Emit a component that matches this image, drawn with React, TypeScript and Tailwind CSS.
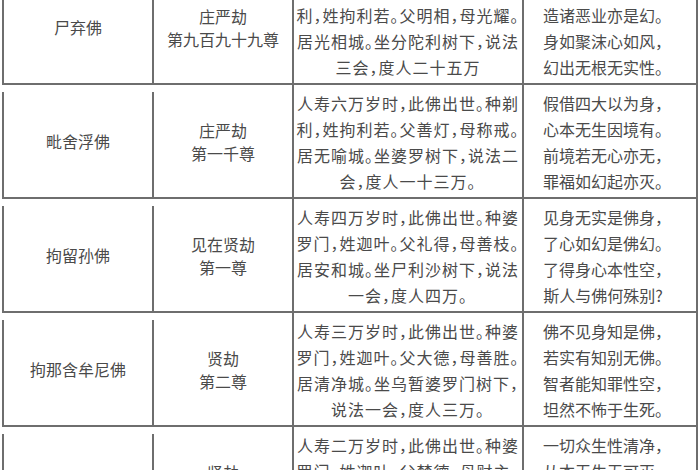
const rows = [
  {
    name: '尸弃佛',
    kalpa: ['庄严劫', '第九百九十九尊'],
    life: ['人寿七万岁时，此佛出世。种刹', '利，姓拘利若。父明相，母光耀。', '居光相城。坐分陀利树下，说法', '三会，度人二十五万'],
    verse: ['起诸善法本是幻，', '造诸恶业亦是幻。', '身如聚沫心如风，', '幻出无根无实性。'],
  },
  {
    name: '毗舍浮佛',
    kalpa: ['庄严劫', '第一千尊'],
    life: ['人寿六万岁时，此佛出世。种剃', '利，姓拘利若。父善灯，母称戒。', '居无喻城。坐婆罗树下，说法二', '会，度人一十三万。'],
    verse: ['假借四大以为身，', '心本无生因境有。', '前境若无心亦无，', '罪福如幻起亦灭。'],
  },
  {
    name: '拘留孙佛',
    kalpa: ['见在贤劫', '第一尊'],
    life: ['人寿四万岁时，此佛出世。种婆', '罗门，姓迦叶。父礼得，母善枝。', '居安和城。坐尸利沙树下，说法', '一会，度人四万。'],
    verse: ['见身无实是佛身，', '了心如幻是佛幻。', '了得身心本性空，', '斯人与佛何殊别?'],
  },
  {
    name: '拘那含牟尼佛',
    kalpa: ['贤劫', '第二尊'],
    life: ['人寿三万岁时，此佛出世。种婆', '罗门，姓迦叶。父大德，母善胜。', '居清净城。坐乌暂婆罗门树下，', '说法一会，度人三万。'],
    verse: ['佛不见身知是佛，', '若实有知别无佛。', '智者能知罪性空，', '坦然不怖于生死。'],
  },
  {
    name: '迦叶佛',
    kalpa: ['贤劫', '第三尊'],
    life: ['人寿二万岁时，此佛出世。种婆', '罗门，姓迦叶。父梵德，母财主。', '居波罗奈城。坐尼拘律树下，', '说法一会，度人二万。'],
    verse: ['一切众生性清净，', '从本无生无可灭。', '即此身心是幻生，', '幻化之中无罪福。'],
  },
];

export default function App() {
  return (
    <div className="h-[470px] w-[700px] overflow-hidden bg-white text-[16px] text-[#4a4a4a] [font-family:'Noto_Sans_CJK_SC',sans-serif] [font-feature-settings:'halt']">
      <div className="-mt-[29px] ml-[2px] flex w-[696px] flex-col">
        {rows.map((row) => (
          <div
            key={row.name}
            className="grid h-[114px] shrink-0 grid-cols-[152px_140px_230px_174px] border-b-2 border-[#6e6e6e]"
          >
            <div className="mt-[7px] flex items-center justify-center border-x-2 border-[#6e6e6e] pb-[7px]">
              {row.name}
            </div>
            <div className="flex flex-col items-center justify-center border-r-2 border-[#6e6e6e] pt-[2px] leading-[23px]">
              {row.kalpa.map((line) => (
                <div key={line}>{line}</div>
              ))}
            </div>
            <div className="flex flex-col overflow-hidden border-r-2 border-[#6e6e6e] pt-[5px] text-center leading-[26px] tracking-[1px]">
              {row.life.map((line) => (
                <div key={line} className="whitespace-nowrap">
                  {line}
                </div>
              ))}
            </div>
            <div className="flex flex-col items-center border-r-2 border-[#6e6e6e] pt-[5px] pr-[14px] leading-[26px]">
              {row.verse.map((line) => (
                <div key={line} className="whitespace-nowrap">
                  {line}
                </div>
              ))}
            </div>
          </div>
        ))}
      </div>
    </div>
  );
}
